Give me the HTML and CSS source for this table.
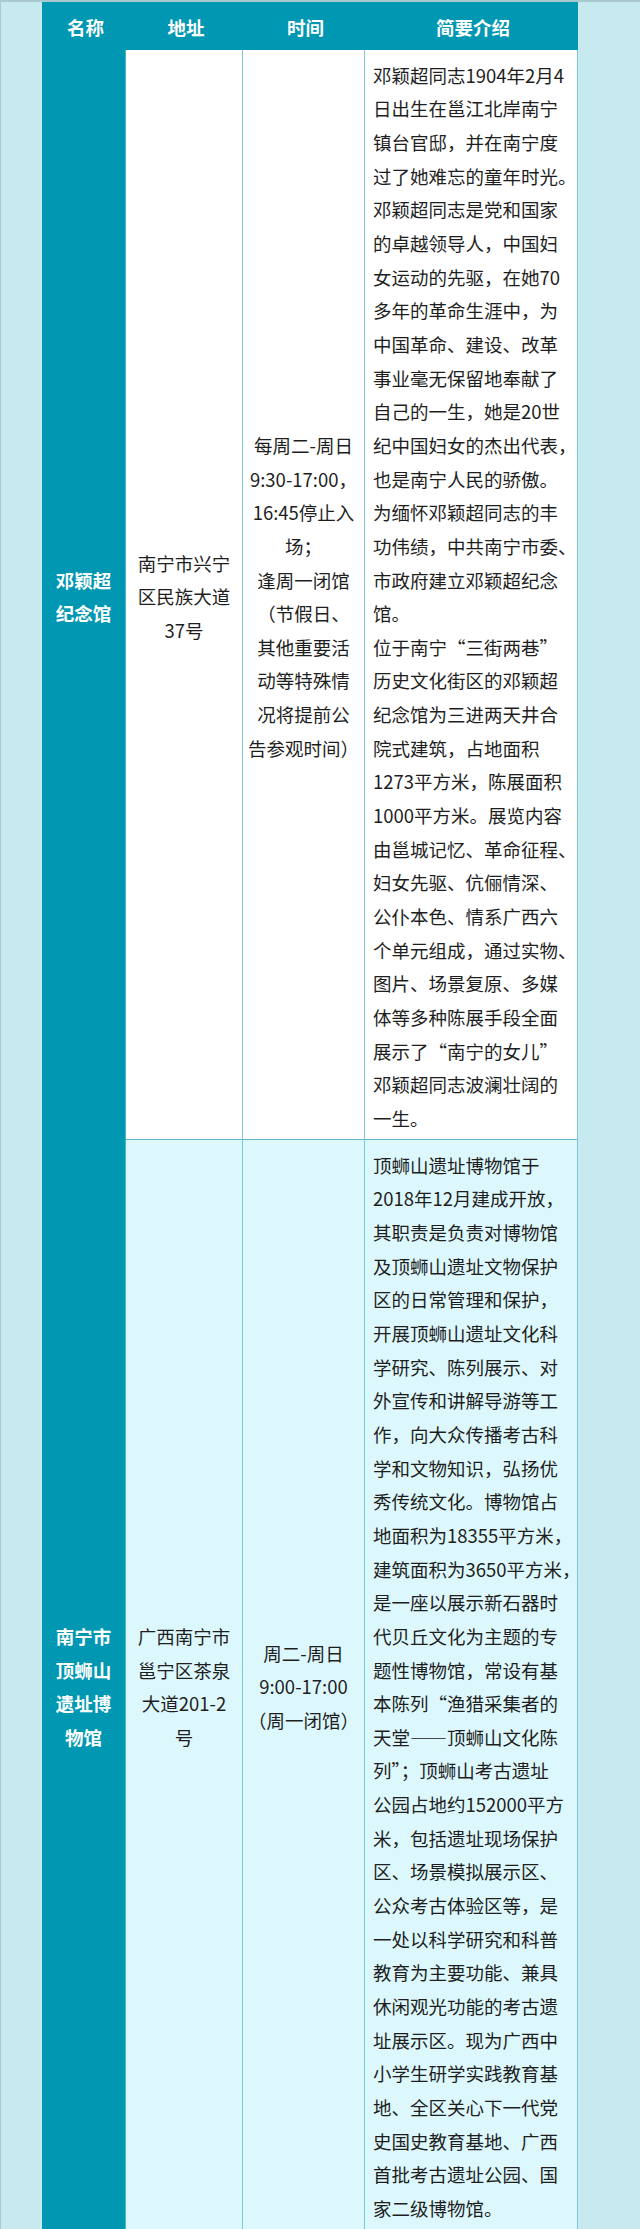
FILE: index.html
```html
<!DOCTYPE html>
<html lang="zh-CN">
<head>
<meta charset="utf-8">
<title>南宁红色场馆简介</title>
<link rel="stylesheet" href="styles.css">
</head>
<body>
<main class="page">
  <div class="venues" role="table">
    <div class="cell head" role="columnheader">名称</div>
    <div class="cell head" role="columnheader">地址</div>
    <div class="cell head" role="columnheader">时间</div>
    <div class="cell head" role="columnheader">简要介绍</div>

    <div class="cell name" role="rowheader">邓颖超纪念馆</div>
    <div class="cell addr" role="cell">南宁市兴宁区民族大道37号</div>
    <div class="cell time" role="cell"><p>每周二-周日<br>9:30-17:00，<br>16:45停止入<br>场；<br>逢周一闭馆<br>（节假日、<br>其他重要活<br>动等特殊情<br>况将提前公<br>告参观时间）</p></div>
    <div class="cell desc" role="cell">
      <p>邓颖超同志1904年2月4<br>日出生在邕江北岸南宁<br>镇台官邸，并在南宁度<br>过了她难忘的童年时光。</p>
      <p>邓颖超同志是党和国家<br>的卓越领导人，中国妇<br>女运动的先驱，在她70<br>多年的革命生涯中，为<br>中国革命、建设、改革<br>事业毫无保留地奉献了<br>自己的一生，她是20世<br>纪中国妇女的杰出代表，<br>也是南宁人民的骄傲。</p>
      <p>为缅怀邓颖超同志的丰<br>功伟绩，中共南宁市委、<br>市政府建立邓颖超纪念<br>馆。</p>
      <p>位于南宁“三街两巷”<br>历史文化街区的邓颖超<br>纪念馆为三进两天井合<br>院式建筑，占地面积<br>1273平方米，陈展面积<br>1000平方米。展览内容<br>由邕城记忆、革命征程、<br>妇女先驱、伉俪情深、<br>公仆本色、情系广西六<br>个单元组成，通过实物、<br>图片、场景复原、多媒<br>体等多种陈展手段全面<br>展示了“南宁的女儿”<br>邓颖超同志波澜壮阔的<br>一生。</p>
    </div>

    <div class="cell name" role="rowheader">南宁市顶蛳山遗址博物馆</div>
    <div class="cell addr alt" role="cell">广西南宁市邕宁区茶泉大道201-2号</div>
    <div class="cell time alt" role="cell"><p>周二-周日<br>9:00-17:00<br>（周一闭馆）</p></div>
    <div class="cell desc alt" role="cell">
      <p>顶蛳山遗址博物馆于<br>2018年12月建成开放，<br>其职责是负责对博物馆<br>及顶蛳山遗址文物保护<br>区的日常管理和保护，<br>开展顶蛳山遗址文化科<br>学研究、陈列展示、对<br>外宣传和讲解导游等工<br>作，向大众传播考古科<br>学和文物知识，弘扬优<br>秀传统文化。博物馆占<br>地面积为18355平方米，<br>建筑面积为3650平方米，<br>是一座以展示新石器时<br>代贝丘文化为主题的专<br>题性博物馆，常设有基<br>本陈列“渔猎采集者的<br>天堂——顶蛳山文化陈<br>列”；顶蛳山考古遗址<br>公园占地约152000平方<br>米，包括遗址现场保护<br>区、场景模拟展示区、<br>公众考古体验区等，是<br>一处以科学研究和科普<br>教育为主要功能、兼具<br>休闲观光功能的考古遗<br>址展示区。现为广西中<br>小学生研学实践教育基<br>地、全区关心下一代党<br>史国史教育基地、广西<br>首批考古遗址公园、国<br>家二级博物馆。</p>
    </div>
  </div>
</main>
</body>
</html>
```

FILE: styles.css
```css
html,
body {
  margin: 0;
  padding: 0;
}

body {
  background: #c7e9f0;
  font-family: "Noto Sans CJK SC", "Noto Sans", sans-serif;
  color: #1e1e1e;
}

.page {
  display: block;
  border-top: 2px solid #a9c8d0;
  border-left: 1px solid #a9c8d0;
  padding-left: 41px;
}

.venues {
  display: grid;
  grid-template-columns: 84px 117px 122px 213px;
  width: 536px;
}

.cell {
  box-sizing: border-box;
  display: flex;
  align-items: center;
  justify-content: center;
  text-align: center;
  font-size: 18.5px;
  line-height: 33.65px;
  padding: 9px 8px 3px;
  border-right: 1px solid #7ccad9;
  border-bottom: 1px solid #5fb8cb;
  background: #ffffff;
}

.cell p {
  margin: 0;
}

.head {
  background: #0097b2;
  color: #ffffff;
  font-weight: 700;
  padding: 9px 6px 4px 10px;
  border-right-color: #0097b2;
  border-bottom-color: #0097b2;
}

.name {
  background: #0097b2;
  color: #ffffff;
  font-weight: 700;
  border-bottom-color: #0097b2;
  border-right-color: #4db4c9;
}

.addr {
  padding-left: 8px;
  padding-right: 8px;
}

.time {
  padding-left: 4px;
  padding-right: 4px;
}

.time p {
  white-space: nowrap;
}

.desc {
  display: block;
  text-align: left;
  padding: 9px 0 3px 8px;
}

.desc p {
  white-space: nowrap;
}

.alt {
  background: #ddf8fd;
}
```
